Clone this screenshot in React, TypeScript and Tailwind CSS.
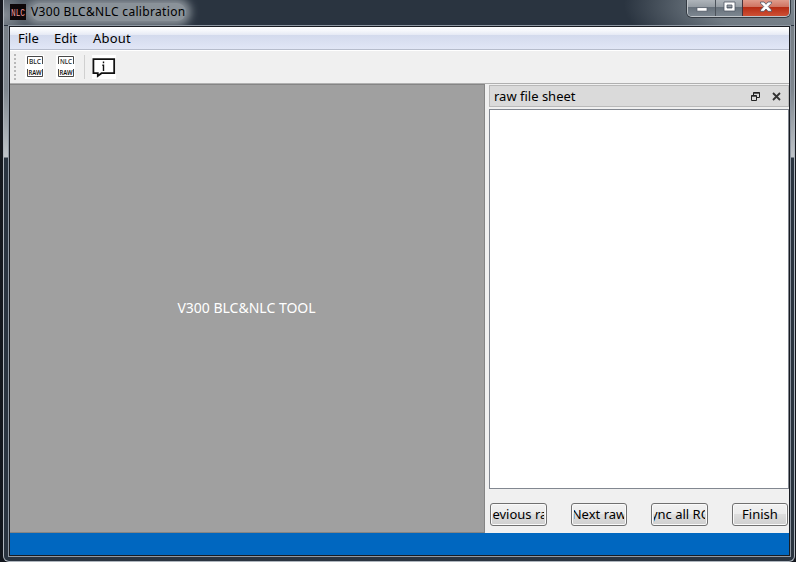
import React from "react";

const ui = "font-['Noto_Sans','Open_Sans',sans-serif] leading-[18px] whitespace-nowrap";

function RawIcon({ label }: { label: string }) {
  return (
    <svg width="19" height="24" viewBox="0 0 19 24" className="shrink-0">
      <rect width="19" height="24" fill="#fff" />
      <path d="M2.5 9V1.5H17.5V9M2.5 14V21.5H17.5V14" fill="none" stroke="#484848" strokeWidth="1" />
      <text x="10" y="9" textAnchor="middle" textLength="12" lengthAdjust="spacingAndGlyphs" fontFamily="Noto Sans, sans-serif" fontSize="7" fontWeight="500" fill="#222">{label}</text>
      <text x="10" y="20" textAnchor="middle" textLength="13" lengthAdjust="spacingAndGlyphs" fontFamily="Noto Sans, sans-serif" fontSize="7" fontWeight="600" fill="#111">RAW</text>
    </svg>
  );
}

function PushButton({ label, width }: { label: string; width: string }) {
  return (
    <button className={`flex h-[23px] ${width} items-start justify-center rounded-[3px] border border-[#707070] bg-[linear-gradient(#f2f2f2_0%,#ebebeb_49%,#dddddd_50%,#cfcfcf_100%)] px-[2px] pt-px shadow-[inset_0_0_0_1px_#fafafa]`}>
      <span className={`${ui} flex w-full justify-center overflow-hidden text-[13px] text-black`}>
        <span className="shrink-0">{label}</span>
      </span>
    </button>
  );
}

function TitleBar() {
  return (
    <header className="flex h-[25px] shrink-0 items-start bg-[radial-gradient(ellipse_170px_60px_at_100%_20%,#7b858e_0%,#707a83_50%,transparent_100%),radial-gradient(ellipse_40px_40px_at_0_60%,#858d95_0%,transparent_100%)]">
      <svg width="16" height="16" viewBox="0 0 16 16" className="relative z-10 mt-1 ml-[6px] shrink-0">
        <rect width="16" height="16" fill="#0d0709" />
        <text x="1" y="12" textLength="14" lengthAdjust="spacingAndGlyphs" fontFamily="Liberation Mono, monospace" fontSize="11" fill="#f09a9a">NLC</text>
      </svg>
      <div className="flex h-[25px] w-[180px] items-start pt-[3px] pl-[5px]">
        <span className="rounded-full bg-[#8a9299] font-['Noto_Sans',sans-serif] text-[12px] leading-[18px] tracking-[0.33px] whitespace-nowrap text-black shadow-[0_0_9px_5px_#8a9299]">V300 BLC&amp;NLC calibration</span>
      </div>
      <div className="mr-[4px] ml-auto flex h-[17px] overflow-hidden rounded-b-[5px] border border-t-0 border-[#c0c5ca] shadow-[0_0_0_1px_#343b43]">
        <div className="flex w-[28px] justify-center border-r border-[#4c535b] bg-[linear-gradient(#aeb4ba_0,#949ba2_45%,#67717b_46%,#7c8690_100%)]">
          <svg width="12" height="14"><rect x="1" y="7.7" width="10" height="3.4" fill="#fff" stroke="#525966" strokeWidth=".7" /></svg>
        </div>
        <div className="flex w-[27px] justify-center border-r border-[#45323a] bg-[linear-gradient(#aeb4ba_0,#949ba2_45%,#67717b_46%,#7c8690_100%)]">
          <svg width="13" height="14"><path d="M1 2H12V11H1ZM4 5V8H9V5Z" fillRule="evenodd" fill="#fff" stroke="#525966" strokeWidth=".8" /></svg>
        </div>
        <div className="flex w-[46px] justify-center bg-[linear-gradient(#df9b8b_0,#cf7462_43%,#b62c14_46%,#ce5035_100%)]">
          <svg width="14" height="14"><path d="M1.5 2H5L7 4.3 9 2H12.5V3.2L9.3 6.5 12.5 10V11.3H9L7 9 5 11.3H1.5V10L4.7 6.5 1.5 3.2Z" fill="#fff" stroke="#4b5264" strokeWidth=".8" /></svg>
        </div>
      </div>
    </header>
  );
}

function MenuBar() {
  return (
    <nav className={`${ui} flex h-[24px] shrink-0 border-b border-white bg-[linear-gradient(#fff_0,#f4f6fb_4px,#e5e9f5_8px,#d3daed_8px,#e1e6f6_22px,#b6bccc_22px)] pt-[2px] pl-2 text-[13px] text-black`}>
      <span className="w-9">File</span>
      <span className="w-[39px]">Edit</span>
      <span className="tracking-[0.2px]">About</span>
    </nav>
  );
}

function ToolBar() {
  return (
    <div className="flex h-[33px] shrink-0 items-start border-b border-[#b0b0b0] pt-1 pl-1">
      <div className="mt-[-1px] h-[27px] w-[2px] bg-[repeating-linear-gradient(#b8b8b8_0,#b8b8b8_2px,#f0f0f0_2px,#f0f0f0_4px)]" />
      <div className="ml-[9px] flex gap-3">
        <RawIcon label="BLC" />
        <RawIcon label="NLC" />
      </div>
      <div className="ml-[9px] h-6 w-px bg-[#d0d0d0]" />
      <svg width="24" height="24" viewBox="0 0 24 24" className="ml-[7px]">
        <rect width="24" height="24" fill="#fff" />
        <path d="M1.4 4.2H22.2V18.2H9.5L5.8 21V18.2H1.4Z" fill="#fff" stroke="#111" strokeWidth="1.8" />
        <path d="M11.5 6.5V8.2M10.3 10.2H11.5V16" fill="none" stroke="#111" strokeWidth="1.4" />
      </svg>
    </div>
  );
}

export default function App() {
  return (
    <div className="h-[562px] w-[796px] overflow-hidden bg-[linear-gradient(#15181e_0,#15181e_158px,#11151c_562px)] px-[3px]">
      <div className="flex h-[562px] w-[792px] flex-col rounded-b-[6px] border-x border-b border-[#aeb5bd] bg-[linear-gradient(#2a3440_0,#2a3440_26px,#777f86_26px,#7e868e_90px,#bfc4c9_157px,#2a3440_158px,#2a3440_100%)]">
        <TitleBar />
        <div className="mx-1 mr-[3px] flex h-[532px] flex-col border border-[#8f98a3]">
          <div className="flex h-[530px] flex-col border border-[#191c22] bg-[#f0f0f0]">
            <MenuBar />
            <ToolBar />
            <div className="flex h-[449px]">
              <main className="flex w-[475px] items-center justify-center border-y border-r border-[#858585] bg-[#a0a0a0] pr-px pb-[2px]">
                <span className={`${ui} text-[14px] text-white`}>V300 BLC&amp;NLC TOOL</span>
              </main>
              <aside className="ml-1 flex grow flex-col pt-px">
                <div className="flex h-[22px] items-center border border-[#b9b9b9] bg-[#dadada] pr-[7px] pl-1">
                  <span className={`${ui} text-[13px] text-black`}>raw file sheet</span>
                  <svg width="9" height="9" className="ml-auto"><path d="M2.5 3V.5H8.5V5.5H6M.5 3.5H5.5V8.5H.5ZM2 1.2H9M0 4.2H6" fill="none" stroke="#222" /></svg>
                  <svg width="9" height="9" className="ml-3"><path d="M1 1 8 8M8 1 1 8" stroke="#333" strokeWidth="1.8" /></svg>
                </div>
                <div className="mt-[2px] h-[380px] border border-[#828790] bg-white" />
                <div className="mt-[14px] flex justify-between px-px">
                  <PushButton label="Previous raw" width="w-[57px]" />
                  <PushButton label="Next raw" width="w-[56px]" />
                  <PushButton label="Sync all ROI" width="w-[57px]" />
                  <PushButton label="Finish" width="w-[56px]" />
                </div>
              </aside>
            </div>
            <footer className="grow bg-[#0067c0]" />
          </div>
        </div>
      </div>
    </div>
  );
}
